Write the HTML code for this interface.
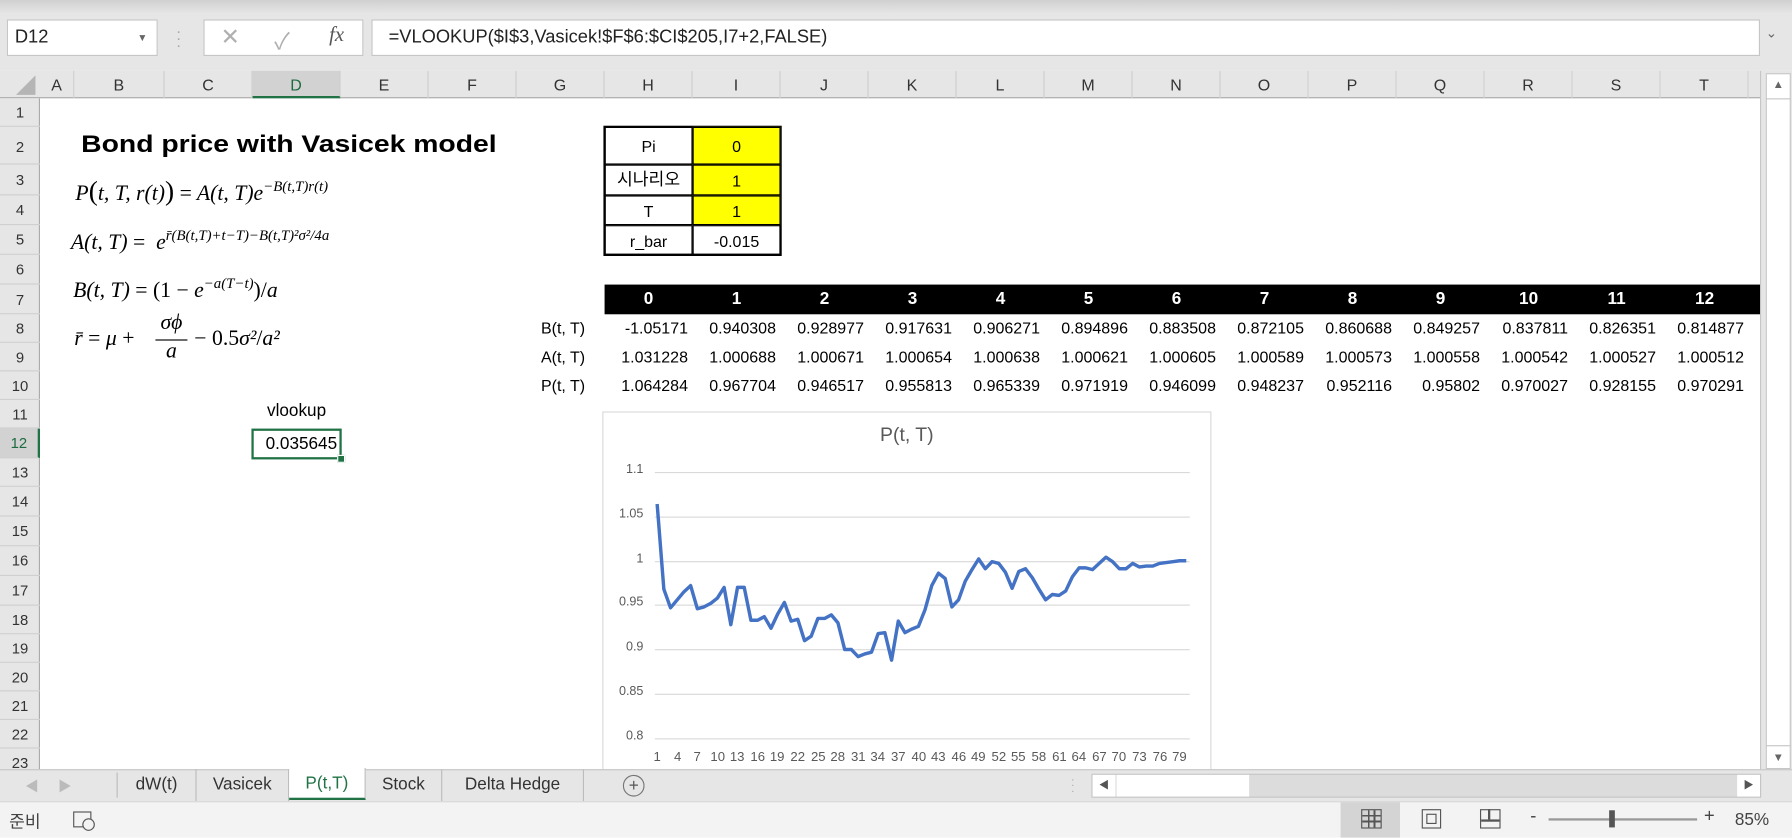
<!DOCTYPE html>
<html><head><meta charset="utf-8"><style>
html,body{margin:0;padding:0;width:1792px;height:838px;overflow:hidden;background:#fff}
#root{position:absolute;left:0;top:0;width:1568px;height:733px;transform:scale(1.142857);transform-origin:0 0;font-family:"Liberation Sans","Noto Sans CJK KR",sans-serif;font-size:14px;color:#000;overflow:hidden;background:#fff}
.a{position:absolute}
.ch{position:absolute;top:62px;height:24px;line-height:24px;text-align:center;color:#333;border-right:1px solid #d0d0d0;box-sizing:border-box;font-size:14px}
.rh{position:absolute;left:0;width:35px;text-align:center;color:#333;border-bottom:1px solid #d0d0d0;box-sizing:border-box;font-size:13px}
.n{position:absolute;width:73px;text-align:right;height:25px;line-height:25px;font-size:14px}
.h{position:absolute;width:77px;text-align:center;color:#fff;font-weight:bold;top:249px;height:26px;line-height:26px;font-size:15px}
.f{position:absolute;font-family:"Liberation Serif","DejaVu Serif",serif;font-style:italic;font-size:19px;white-space:nowrap}
.f sup{font-size:13px;vertical-align:8px}
.tc{position:absolute;box-sizing:border-box;text-align:center;border:1px solid #000}
.yl{position:absolute;width:30px;text-align:right;font-size:11px;color:#595959;left:533px}
.gl{position:absolute;left:573px;width:468px;height:1px;background:#d9d9d9}
.xl{position:absolute;top:657px;width:20px;text-align:center;font-size:11.5px;color:#595959}
.tab{position:absolute;top:673px;height:28px;line-height:28px;text-align:center;font-size:15px;color:#333;border-right:1px solid #bdbdbd;box-sizing:border-box}
</style></head><body><div id="root">
<div class="a" style="left:0;top:0;width:1568px;height:62px;background:#e6e6e6"></div>
<div class="a" style="left:0;top:0;width:1568px;height:12px;background:linear-gradient(#d0d0d0,#e6e6e6)"></div>
<div class="a" style="left:6px;top:17px;width:132px;height:32px;background:#fff;border:1px solid #c6c6c6;box-sizing:border-box;line-height:30px;padding-left:6px;font-size:16px;color:#222">D12<span style="position:absolute;right:8px;font-size:9px;color:#666">▼</span></div>
<div class="a" style="left:154px;top:24px;color:#aaa;font-size:14px;line-height:6px">·<br>·<br>·</div>
<div class="a" style="left:178px;top:17px;width:140px;height:32px;background:#fff;border:1px solid #c6c6c6;box-sizing:border-box"></div>
<div class="a" style="left:193px;top:20px;font-size:20px;color:#b0b0b0">✕</div>
<div class="a" style="left:240px;top:20px;font-size:20px;color:#b0b0b0">✓</div>
<div class="a" style="left:288px;top:20px;font-size:18px;color:#555;font-family:'Liberation Serif',serif;font-style:italic">fx</div>
<div class="a" style="left:325px;top:17px;width:1215px;height:32px;background:#fff;border:1px solid #c6c6c6;box-sizing:border-box;line-height:30px;padding-left:14px;font-size:16px;color:#222">=VLOOKUP($I$3,Vasicek!$F$6:$CI$205,I7+2,FALSE)</div>
<div class="a" style="left:1545px;top:22px;font-size:12px;color:#666">⌄</div>
<div class="a" style="left:0;top:62px;width:1545px;height:24px;background:#e6e6e6;border-bottom:1px solid #ababab;box-sizing:border-box"></div>
<div class="a" style="left:14px;top:66px;width:0;height:0;border-left:17px solid transparent;border-bottom:17px solid #b5b5b5"></div>
<div class="ch" style="left:35px;width:30px">A</div>
<div class="ch" style="left:65px;width:79px">B</div>
<div class="ch" style="left:144px;width:77px">C</div>
<div class="ch" style="left:221px;width:77px;background:#d2d2d2;color:#1e6b41;border-bottom:2px solid #217346">D</div>
<div class="ch" style="left:298px;width:77px">E</div>
<div class="ch" style="left:375px;width:77px">F</div>
<div class="ch" style="left:452px;width:77px">G</div>
<div class="ch" style="left:529px;width:77px">H</div>
<div class="ch" style="left:606px;width:77px">I</div>
<div class="ch" style="left:683px;width:77px">J</div>
<div class="ch" style="left:760px;width:77px">K</div>
<div class="ch" style="left:837px;width:77px">L</div>
<div class="ch" style="left:914px;width:77px">M</div>
<div class="ch" style="left:991px;width:77px">N</div>
<div class="ch" style="left:1068px;width:77px">O</div>
<div class="ch" style="left:1145px;width:77px">P</div>
<div class="ch" style="left:1222px;width:77px">Q</div>
<div class="ch" style="left:1299px;width:77px">R</div>
<div class="ch" style="left:1376px;width:77px">S</div>
<div class="ch" style="left:1453px;width:77px">T</div>
<div class="a" style="left:0;top:86px;width:35px;height:587px;background:#e6e6e6;border-right:1px solid #ababab;box-sizing:border-box"></div>
<div class="rh" style="top:86px;height:25px;line-height:25px">1</div>
<div class="rh" style="top:111px;height:33px;line-height:36px">2</div>
<div class="rh" style="top:144px;height:27px;line-height:27px">3</div>
<div class="rh" style="top:171px;height:26px;line-height:26px">4</div>
<div class="rh" style="top:197px;height:26px;line-height:26px">5</div>
<div class="rh" style="top:223px;height:26px;line-height:26px">6</div>
<div class="rh" style="top:249px;height:26px;line-height:28px">7</div>
<div class="rh" style="top:275px;height:25px;line-height:25px">8</div>
<div class="rh" style="top:300px;height:25px;line-height:25px">9</div>
<div class="rh" style="top:325px;height:25px;line-height:25px">10</div>
<div class="rh" style="top:350px;height:25px;line-height:25px">11</div>
<div class="rh" style="top:375px;height:26px;line-height:26px;background:#d2d2d2;color:#1e6b41;border-right:2px solid #217346">12</div>
<div class="rh" style="top:401px;height:25px;line-height:25px">13</div>
<div class="rh" style="top:426px;height:26px;line-height:26px">14</div>
<div class="rh" style="top:452px;height:26px;line-height:26px">15</div>
<div class="rh" style="top:478px;height:26px;line-height:26px">16</div>
<div class="rh" style="top:504px;height:26px;line-height:26px">17</div>
<div class="rh" style="top:530px;height:25px;line-height:25px">18</div>
<div class="rh" style="top:555px;height:25px;line-height:25px">19</div>
<div class="rh" style="top:580px;height:25px;line-height:25px">20</div>
<div class="rh" style="top:605px;height:25px;line-height:25px">21</div>
<div class="rh" style="top:630px;height:25px;line-height:25px">22</div>
<div class="rh" style="top:655px;height:25px;line-height:25px">23</div>
<div class="a" style="left:1540px;top:62px;width:28px;height:611px;background:#e6e6e6;border-left:1px solid #c6c6c6;box-sizing:border-box"></div>
<div class="a" style="left:1545px;top:64px;width:22px;height:609px;background:#fff;border:1px solid #c6c6c6;box-sizing:border-box"></div>
<div class="a" style="left:1545px;top:64px;width:22px;height:22px;border-bottom:1px solid #c6c6c6;text-align:center;font-size:10px;line-height:22px;color:#666">▲</div>
<div class="a" style="left:1545px;top:652px;width:22px;height:21px;border-top:1px solid #c6c6c6;text-align:center;font-size:10px;line-height:21px;color:#666">▼</div>
<div class="a" style="left:71px;top:115px;font-size:21px;font-weight:900;white-space:nowrap;transform:scaleX(1.18);transform-origin:0 0">Bond price with Vasicek model</div>
<div class="f" style="left:66px;top:155px">P<span style="font-size:24px;font-style:normal">(</span>t, T, r(t)<span style="font-size:24px;font-style:normal">)</span> <span style="font-style:normal">=</span> A(t, T)e<sup>−B(t,T)r(t)</sup></div>
<div class="f" style="left:62px;top:198px">A(t, T) <span style="font-style:normal">=</span>&nbsp; e<sup>r̄(B(t,T)+t−T)−B(t,T)²σ²/4a</sup></div>
<div class="f" style="left:64px;top:240px">B(t, T) <span style="font-style:normal">= (1 −</span> e<sup>−a(T−t)</sup><span style="font-style:normal">)/</span>a</div>
<div class="f" style="left:65px;top:286px">r̄ <span style="font-style:normal">=</span> μ <span style="font-style:normal">+</span></div>
<div class="f" style="left:136px;top:272px;text-align:center;width:28px">σϕ</div>
<div class="a" style="left:136px;top:297px;width:28px;height:1px;background:#000"></div>
<div class="f" style="left:136px;top:297px;text-align:center;width:28px">a</div>
<div class="f" style="left:170px;top:286px"><span style="font-style:normal">− 0.5</span>σ²<span style="font-style:normal">/</span>a²</div>
<div class="a" style="left:221px;top:351px;width:77px;text-align:center;font-size:15px">vlookup</div>
<div class="a" style="left:220px;top:375px;width:79px;height:27px;border:2px solid #217346;box-sizing:border-box;text-align:right;padding-right:2px;line-height:23px;font-size:15px">0.035645</div>
<div class="a" style="left:295px;top:398px;width:5px;height:5px;background:#217346;border:1px solid #fff"></div>
<div class="a" style="left:528px;top:110px;width:156px;height:114px;border:2px solid #000;box-sizing:border-box"></div>
<div class="tc" style="left:529px;top:111px;width:77px;height:33px;line-height:33px">Pi</div>
<div class="tc" style="left:606px;top:111px;width:77px;height:33px;line-height:33px;background:#ff0">0</div>
<div class="tc" style="left:529px;top:144px;width:77px;height:27px;line-height:25px;font-size:15px">시나리오</div>
<div class="tc" style="left:606px;top:144px;width:77px;height:27px;line-height:27px;background:#ff0">1</div>
<div class="tc" style="left:529px;top:171px;width:77px;height:26px;line-height:26px">T</div>
<div class="tc" style="left:606px;top:171px;width:77px;height:26px;line-height:26px;background:#ff0">1</div>
<div class="tc" style="left:529px;top:197px;width:77px;height:26px;line-height:26px">r_bar</div>
<div class="tc" style="left:606px;top:197px;width:77px;height:26px;line-height:26px">-0.015</div>
<div class="a" style="left:529px;top:249px;width:1011px;height:26px;background:#000"></div>
<div class="h" style="left:529px">0</div><div class="h" style="left:606px">1</div><div class="h" style="left:683px">2</div><div class="h" style="left:760px">3</div><div class="h" style="left:837px">4</div><div class="h" style="left:914px">5</div><div class="h" style="left:991px">6</div><div class="h" style="left:1068px">7</div><div class="h" style="left:1145px">8</div><div class="h" style="left:1222px">9</div><div class="h" style="left:1299px">10</div><div class="h" style="left:1376px">11</div><div class="h" style="left:1453px">12</div>
<div class="n" style="left:439px;top:275px">B(t, T)</div>
<div class="n" style="left:439px;top:300px">A(t, T)</div>
<div class="n" style="left:439px;top:325px">P(t, T)</div>
<div class="n" style="left:529px;top:275px">-1.05171</div><div class="n" style="left:606px;top:275px">0.940308</div><div class="n" style="left:683px;top:275px">0.928977</div><div class="n" style="left:760px;top:275px">0.917631</div><div class="n" style="left:837px;top:275px">0.906271</div><div class="n" style="left:914px;top:275px">0.894896</div><div class="n" style="left:991px;top:275px">0.883508</div><div class="n" style="left:1068px;top:275px">0.872105</div><div class="n" style="left:1145px;top:275px">0.860688</div><div class="n" style="left:1222px;top:275px">0.849257</div><div class="n" style="left:1299px;top:275px">0.837811</div><div class="n" style="left:1376px;top:275px">0.826351</div><div class="n" style="left:1453px;top:275px">0.814877</div>
<div class="n" style="left:529px;top:300px">1.031228</div><div class="n" style="left:606px;top:300px">1.000688</div><div class="n" style="left:683px;top:300px">1.000671</div><div class="n" style="left:760px;top:300px">1.000654</div><div class="n" style="left:837px;top:300px">1.000638</div><div class="n" style="left:914px;top:300px">1.000621</div><div class="n" style="left:991px;top:300px">1.000605</div><div class="n" style="left:1068px;top:300px">1.000589</div><div class="n" style="left:1145px;top:300px">1.000573</div><div class="n" style="left:1222px;top:300px">1.000558</div><div class="n" style="left:1299px;top:300px">1.000542</div><div class="n" style="left:1376px;top:300px">1.000527</div><div class="n" style="left:1453px;top:300px">1.000512</div>
<div class="n" style="left:529px;top:325px">1.064284</div><div class="n" style="left:606px;top:325px">0.967704</div><div class="n" style="left:683px;top:325px">0.946517</div><div class="n" style="left:760px;top:325px">0.955813</div><div class="n" style="left:837px;top:325px">0.965339</div><div class="n" style="left:914px;top:325px">0.971919</div><div class="n" style="left:991px;top:325px">0.946099</div><div class="n" style="left:1068px;top:325px">0.948237</div><div class="n" style="left:1145px;top:325px">0.952116</div><div class="n" style="left:1222px;top:325px">0.95802</div><div class="n" style="left:1299px;top:325px">0.970027</div><div class="n" style="left:1376px;top:325px">0.928155</div><div class="n" style="left:1453px;top:325px">0.970291</div>
<div class="a" style="left:527px;top:360px;width:533px;height:330px;border:1px solid #d9d9d9;box-sizing:border-box;background:#fff"></div>
<div class="a" style="left:527px;top:371px;width:533px;text-align:center;font-size:17px;color:#595959">P(t, T)</div>
<div class="gl" style="top:413px"></div><div class="gl" style="top:452px"></div><div class="gl" style="top:491px"></div><div class="gl" style="top:529px"></div><div class="gl" style="top:568px"></div><div class="gl" style="top:607px"></div><div class="gl" style="top:646px"></div>
<div class="yl" style="top:405px">1.1</div><div class="yl" style="top:444px">1.05</div><div class="yl" style="top:483px">1</div><div class="yl" style="top:521px">0.95</div><div class="yl" style="top:560px">0.9</div><div class="yl" style="top:599px">0.85</div><div class="yl" style="top:638px">0.8</div>
<svg class="a" style="left:575px;top:413px;overflow:visible" width="463" height="233" viewBox="0 -1.1 79 0.3" preserveAspectRatio="none"><polyline fill="none" stroke="#4472c4" stroke-width="3" vector-effect="non-scaling-stroke" stroke-linejoin="round" points="0,-1.064 1,-0.968 2,-0.947 3,-0.956 4,-0.965 5,-0.972 6,-0.946 7,-0.948 8,-0.952 9,-0.958 10,-0.970 11,-0.928 12,-0.970 13,-0.970 14,-0.933 15,-0.933 16,-0.937 17,-0.924 18,-0.940 19,-0.953 20,-0.932 21,-0.934 22,-0.910 23,-0.915 24,-0.935 25,-0.935 26,-0.939 27,-0.930 28,-0.900 29,-0.900 30,-0.892 31,-0.895 32,-0.897 33,-0.918 34,-0.919 35,-0.888 36,-0.932 37,-0.919 38,-0.923 39,-0.926 40,-0.945 41,-0.972 42,-0.986 43,-0.980 44,-0.948 45,-0.956 46,-0.977 47,-0.990 48,-1.002 49,-0.991 50,-0.999 51,-0.997 52,-0.987 53,-0.969 54,-0.988 55,-0.991 56,-0.981 57,-0.968 58,-0.956 59,-0.962 60,-0.961 61,-0.966 62,-0.982 63,-0.992 64,-0.992 65,-0.990 66,-0.997 67,-1.004 68,-0.999 69,-0.991 70,-0.991 71,-0.997 72,-0.993 73,-0.994 74,-0.994 75,-0.997 76,-0.998 77,-0.999 78,-1.000 79,-1.000"/></svg>
<div class="xl" style="left:565px">1</div><div class="xl" style="left:583px">4</div><div class="xl" style="left:600px">7</div><div class="xl" style="left:618px">10</div><div class="xl" style="left:635px">13</div><div class="xl" style="left:653px">16</div><div class="xl" style="left:670px">19</div><div class="xl" style="left:688px">22</div><div class="xl" style="left:706px">25</div><div class="xl" style="left:723px">28</div><div class="xl" style="left:741px">31</div><div class="xl" style="left:758px">34</div><div class="xl" style="left:776px">37</div><div class="xl" style="left:794px">40</div><div class="xl" style="left:811px">43</div><div class="xl" style="left:829px">46</div><div class="xl" style="left:846px">49</div><div class="xl" style="left:864px">52</div><div class="xl" style="left:881px">55</div><div class="xl" style="left:899px">58</div><div class="xl" style="left:917px">61</div><div class="xl" style="left:934px">64</div><div class="xl" style="left:952px">67</div><div class="xl" style="left:969px">70</div><div class="xl" style="left:987px">73</div><div class="xl" style="left:1005px">76</div><div class="xl" style="left:1022px">79</div>
<div class="a" style="left:0;top:673px;width:1568px;height:28px;background:#e6e6e6;border-top:1px solid #c6c6c6;box-sizing:border-box"></div>
<div class="a" style="left:22px;top:679px;color:#bbb;font-size:12px">◀&nbsp;&nbsp;&nbsp;&nbsp; ▶</div>
<div class="a" style="left:102px;top:676px;width:1px;height:22px;background:#bdbdbd"></div>
<div class="tab" style="left:103px;width:69px">dW(t)</div>
<div class="tab" style="left:172px;width:81px">Vasicek</div>
<div class="tab" style="left:253px;width:67px;background:#fff;color:#217346;border-bottom:2px solid #217346;top:672px">P(t,T)</div>
<div class="tab" style="left:320px;width:67px">Stock</div>
<div class="tab" style="left:387px;width:124px">Delta Hedge</div>
<div class="a" style="left:545px;top:678px;width:17px;height:17px;border:1px solid #777;border-radius:50%;text-align:center;line-height:17px;color:#555;font-size:15px">+</div>
<div class="a" style="left:937px;top:680px;color:#aaa;font-size:10px;line-height:5px">·<br>·<br>·</div>
<div class="a" style="left:955px;top:677px;width:586px;height:21px;background:#dcdcdc;border:1px solid #c6c6c6;box-sizing:border-box"></div>
<div class="a" style="left:956px;top:678px;width:20px;height:19px;background:#fff;text-align:center;font-size:9px;line-height:19px;color:#555">◀</div>
<div class="a" style="left:977px;top:678px;width:116px;height:19px;background:#fff"></div>
<div class="a" style="left:1520px;top:678px;width:20px;height:19px;background:#fff;text-align:center;font-size:9px;line-height:19px;color:#555">▶</div>
<div class="a" style="left:0;top:701px;width:1568px;height:32px;background:#f3f3f3;border-top:1px solid #d6d6d6;box-sizing:border-box"></div>
<div class="a" style="left:8px;top:708px;font-size:15px;color:#444">준비</div>
<div class="a" style="left:64px;top:710px;width:16px;height:14px;border:1.5px solid #555;box-sizing:border-box"></div>
<div class="a" style="left:72px;top:716px;width:9px;height:9px;border:1.5px solid #555;border-radius:50%;background:#f3f3f3"></div>
<div class="a" style="left:1173px;top:702px;width:52px;height:31px;background:#d4d4d4"></div>
<div class="a" style="left:1191px;top:708px;width:18px;height:17px;border:1.5px solid #555;box-sizing:border-box;background:linear-gradient(90deg,transparent 5px,#555 5px,#555 6.5px,transparent 6.5px,transparent 10px,#555 10px,#555 11.5px,transparent 11.5px),linear-gradient(transparent 4px,#555 4px,#555 5.5px,transparent 5.5px,transparent 9px,#555 9px,#555 10.5px,transparent 10.5px)"></div>
<div class="a" style="left:1244px;top:708px;width:17px;height:17px;border:1.5px solid #555;box-sizing:border-box"></div>
<div class="a" style="left:1248px;top:712px;width:9px;height:9px;border:1.5px solid #555;box-sizing:border-box"></div>
<div class="a" style="left:1295px;top:708px;width:18px;height:17px;border:1.5px solid #555;box-sizing:border-box"></div>
<div class="a" style="left:1302px;top:708px;width:1.5px;height:9px;background:#555"></div>
<div class="a" style="left:1296px;top:717px;width:16px;height:1.5px;background:#555"></div>
<div class="a" style="left:1339px;top:706px;font-size:16px;color:#444">-</div>
<div class="a" style="left:1355px;top:716px;width:130px;height:2px;background:#999"></div>
<div class="a" style="left:1408px;top:709px;width:5px;height:15px;background:#555"></div>
<div class="a" style="left:1491px;top:706px;font-size:16px;color:#444">+</div>
<div class="a" style="left:1518px;top:709px;font-size:15px;color:#444">85%</div>
</div></body></html>
